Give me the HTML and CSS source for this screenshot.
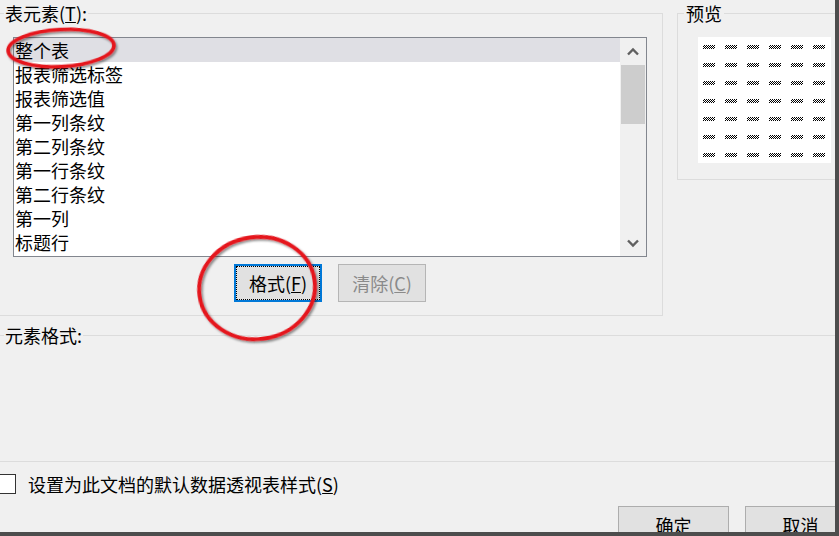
FILE: index.html
```html
<!DOCTYPE html>
<html lang="zh-CN">
<head>
<meta charset="utf-8">
<title>数据透视表样式</title>
<link rel="stylesheet" href="styles.css">
</head>
<body>
<div class="window">
  <div class="top">
    <fieldset class="group elements">
      <legend>表元素(<u>T</u>):</legend>
      <div class="listbox">
        <ul class="items">
          <li class="sel">整个表</li>
          <li>报表筛选标签</li>
          <li>报表筛选值</li>
          <li>第一列条纹</li>
          <li>第二列条纹</li>
          <li>第一行条纹</li>
          <li>第二行条纹</li>
          <li>第一列</li>
          <li>标题行</li>
        </ul>
        <div class="scrollbar">
          <div class="arrow"><svg width="12" height="9" viewBox="0 0 12 9"><polyline points="1,7.5 6,2.5 11,7.5" fill="none" stroke="#606060" stroke-width="2.4"/></svg></div>
          <div class="thumb"></div>
          <div class="track"></div>
          <div class="arrow"><svg width="12" height="9" viewBox="0 0 12 9"><polyline points="1,1.5 6,6.5 11,1.5" fill="none" stroke="#606060" stroke-width="2.4"/></svg></div>
        </div>
      </div>
      <div class="actions">
        <button class="btn focused">格式(<u>F</u>)</button>
        <button class="btn disabled">清除(<u>C</u>)</button>
      </div>
    </fieldset>
    <fieldset class="group preview">
      <legend>预览</legend>
      <div class="swatch">
        <span></span><span></span><span></span><span></span><span></span><span></span>
        <span></span><span></span><span></span><span></span><span></span><span></span>
        <span></span><span></span><span></span><span></span><span></span><span></span>
        <span></span><span></span><span></span><span></span><span></span><span></span>
        <span></span><span></span><span></span><span></span><span></span><span></span>
        <span></span><span></span><span></span><span></span><span></span><span></span>
        <span></span><span></span><span></span><span></span><span></span><span></span>
      </div>
    </fieldset>
  </div>
  <fieldset class="group format">
    <legend>元素格式:</legend>
  </fieldset>
  <label class="check"><span class="box"></span><span>设置为此文档的默认数据透视表样式(<u>S</u>)</span></label>
  <div class="footer">
    <button class="btn big">确定</button>
    <button class="btn big">取消</button>
  </div>
</div>
<svg class="marks" width="839" height="536" viewBox="0 0 839 536">
  <defs>
    <filter id="sh" x="-20%" y="-20%" width="140%" height="140%">
      <feDropShadow dx="1.5" dy="2" stdDeviation="1.2" flood-color="#000" flood-opacity="0.45"/>
    </filter>
  </defs>
  <ellipse cx="61" cy="48" rx="53" ry="18.5" transform="rotate(-3 61 48)" fill="none" stroke="#e5121a" stroke-width="3.5" filter="url(#sh)"/>
  <ellipse cx="257" cy="288" rx="58" ry="51" transform="rotate(-8 257 288)" fill="none" stroke="#e5121a" stroke-width="3.8" filter="url(#sh)"/>
</svg>
</body>
</html>
```

FILE: styles.css
```css
* { box-sizing: border-box; }
html, body { margin: 0; padding: 0; }
body {
  width: 839px;
  height: 536px;
  overflow: hidden;
  position: relative;
  background: #f0f0f0;
  font-family: "Noto Sans CJK SC", "Microsoft YaHei", sans-serif;
  font-size: 18px;
  color: #000;
}
.window {
  width: 839px;
  height: 536px;
  border-right: 4px solid #4d4d4d;
  border-bottom: 4px solid #4d4d4d;
  overflow: hidden;
  display: flex;
  flex-direction: column;
}
.top {
  display: flex;
  align-items: flex-start;
  flex: none;
}
.group {
  margin: 3px 0 0;
  padding: 0;
  border: 1px solid #dcdcdc;
  min-width: 0;
  flex: none;
}
.group legend {
  padding: 0 1px;
  margin-left: 4px;
  height: 21px;
  line-height: 21px;
  font-size: 18px;
  white-space: nowrap;
}
.elements {
  margin-left: -1px;
  width: 664px;
  height: 313px;
}
.listbox {
  margin: 13px 0 0 13px;
  width: 634px;
  height: 220px;
  border: 1px solid #82868e;
  background: #fff;
  display: flex;
}
.items {
  list-style: none;
  margin: 0;
  padding: 0;
  flex: 1;
}
.items li {
  height: 24px;
  line-height: 24px;
  padding-left: 1px;
  white-space: nowrap;
}
.items li.sel { background: #dfdfe4; }
.scrollbar {
  width: 26px;
  background: #f0f0f0;
  display: flex;
  flex-direction: column;
}
.arrow {
  height: 26px;
  display: flex;
  align-items: center;
  justify-content: center;
}
.thumb {
  height: 59px;
  margin: 1px 1px 0;
  background: #cdcdcd;
}
.track { flex: 1; }
.actions {
  margin: 7px 0 0 13px;
  width: 634px;
  display: flex;
  justify-content: center;
  gap: 16px;
}
.btn {
  font: inherit;
  font-size: 18px;
  line-height: 22px;
  color: #000;
  background: #e1e1e1;
  border: 1px solid #adadad;
  padding: 0;
  width: 88px;
  height: 38px;
  margin: 0;
}
.btn.focused {
  border: 2px solid #0078d7;
  outline: 1px dotted #000;
  outline-offset: -3px;
}
.btn.disabled {
  color: #8a8a8a;
  border-color: #b5b5b5;
}
.preview {
  margin-left: 14px;
  width: 180px;
  height: 177px;
}
.preview legend {
  margin-left: 6px;
  padding: 0 2px;
}
.swatch {
  margin: 13px 0 0 20px;
  width: 133px;
  height: 126px;
  background: #fff;
  display: grid;
  grid-template-columns: repeat(6, 12px);
  grid-auto-rows: 4px;
  column-gap: 10px;
  row-gap: 14px;
  padding: 8px 0 0 5px;
}
.swatch span {
  background-image: repeating-conic-gradient(#000 0% 25%, #fff 0% 50%);
  background-size: 2px 2px;
}
.format {
  margin: 9px 0 0 -1px;
  width: 845px;
  height: 137px;
}
.check {
  margin-top: 12px;
  height: 20px;
  display: flex;
  align-items: center;
  gap: 12px;
  line-height: 20px;
  white-space: nowrap;
}
.check .box {
  width: 20px;
  height: 20px;
  margin-left: -4px;
  background: #fff;
  border: 1px solid #333;
  flex: none;
}
.footer {
  margin-top: 12px;
  margin-right: -21px;
  display: flex;
  justify-content: flex-end;
  gap: 16px;
}
.btn.big {
  width: 111px;
  height: 38px;
}
.marks {
  position: absolute;
  left: 0;
  top: 0;
  pointer-events: none;
}
```
